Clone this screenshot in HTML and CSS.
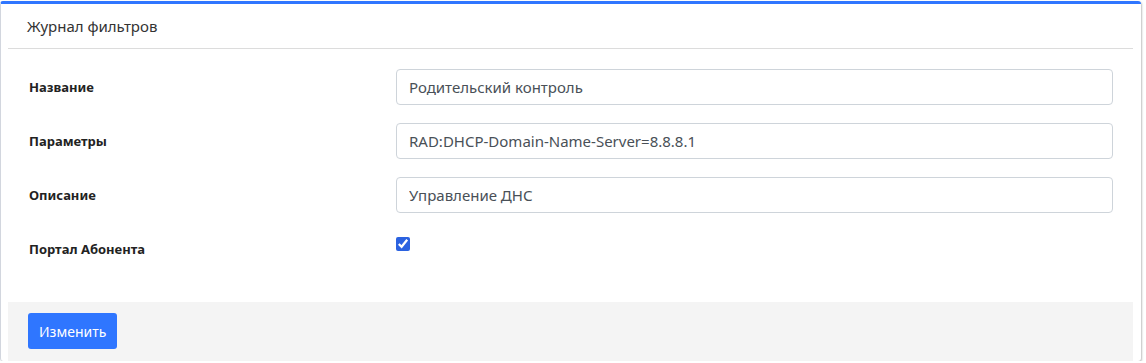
FILE: index.html
```html
<!DOCTYPE html>
<html lang="ru">
  <head>
    <meta charset="UTF-8" />
    <meta name="viewport" content="width=device-width, initial-scale=1.0" />
    <title>Журнал фильтров</title>
    <link rel="stylesheet" href="styles.css">
  </head>
  <body>
    <div class="box">
      <div class="box-header">Журнал фильтров</div>

      <form class="box-body">
        <div class="form-row">
          <label for="name">Название</label>
          <input type="text" id="name" value="Родительский контроль" />
        </div>
        <div class="form-row">
          <label for="params">Параметры</label>
          <input type="text" id="params" value="RAD:DHCP-Domain-Name-Server=8.8.8.1" />
        </div>
        <div class="form-row">
          <label for="descr">Описание</label>
          <input type="text" id="descr" value="Управление ДНС" />
        </div>
        <div class="form-row check-row">
          <label for="portal">Портал Абонента</label>
          <div><input type="checkbox" id="portal" checked /></div>
        </div>
      </form>

      <div class="box-footer">
        <button type="button">Изменить</button>
      </div>
    </div>
  </body>
</html>
```

FILE: styles.css
```css
body {
  margin: 0;
  padding-top: 1px;
  font-family: "Noto Sans", "Open Sans", sans-serif;
  background: #fff;
}
.box {
  width: 1125px;
  padding: 0 8px 0 7px;
  border-top: 3px solid #2f76ff;
  border-left: 1px solid #d2d6de;
  border-radius: 3px;
  box-shadow: 1px 1px 2px rgba(0, 0, 0, 0.25);
  background: #fff;
}
.box-header {
  height: 44px;
  line-height: 44px;
  padding-left: 19px;
  font-size: 15px;
  color: #333;
  border-bottom: 1px solid #dcdcdc;
}
.box-body {
  padding: 20px 20px 35px 21px;
  margin: 0;
}
.form-row {
  display: grid;
  grid-template-columns: 367px 1fr;
  align-items: center;
  margin-bottom: 18px;
}
.form-row label {
  font-size: 13px;
  font-weight: bold;
  color: #222;
}
.form-row input[type="text"] {
  height: 36px;
  box-sizing: border-box;
  padding: 0 12px;
  border: 1px solid #ced4da;
  border-radius: 4px;
  font-family: inherit;
  font-size: 15px;
  color: #495057;
}
.check-row {
  margin-bottom: 0;
  height: 36px;
}
.check-row div {
  align-self: start;
  padding-top: 3px;
}
.check-row input {
  width: 14px;
  height: 14px;
  margin: 0;
  accent-color: #2b62e0;
}
.box-footer {
  background: #f4f4f4;
  padding: 11px 20px 12px 20px;
}
button {
  height: 36px;
  padding: 0 11px;
  background-color: #2f76ff;
  color: white;
  border: none;
  border-radius: 3px;
  font-family: inherit;
  font-size: 14px;
  cursor: pointer;
}
```
